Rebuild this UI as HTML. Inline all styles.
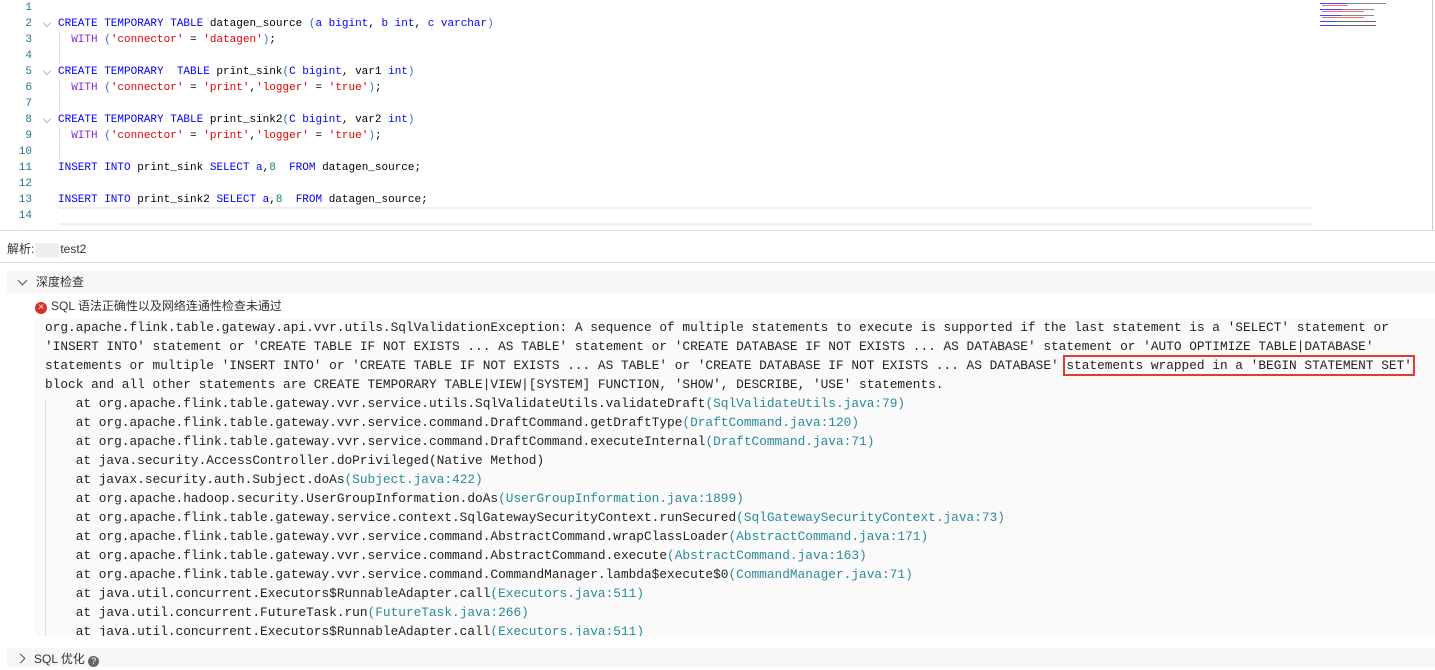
<!DOCTYPE html>
<html><head><meta charset="utf-8"><style>
body{margin:0;width:1435px;height:667px;overflow:hidden;background:#fff;font-family:"Liberation Sans","Noto Sans CJK SC",sans-serif;position:relative}
.ed{position:absolute;left:0;top:0;width:1435px;height:230px;border-bottom:1px solid #ddd;font-family:"Liberation Mono",monospace;font-size:11px}
.ln{position:absolute;left:0;width:32px;text-align:right;color:#237893;height:16px;line-height:16px}
.cl{position:absolute;left:58px;height:16px;line-height:16px;white-space:pre;color:#000}
.k{color:#0000ff}.p{color:#8030e0}.s{color:#e00000}.n{color:#098658}.b{color:#3070d0}
.fold{position:absolute;left:44px;width:5px;height:5px;border-right:1px solid #bbb;border-bottom:1px solid #bbb;transform:rotate(45deg)}
.gl{position:absolute;left:59px;width:1px;background:#ddd}
.mono{font-family:"Liberation Mono",monospace;font-size:12.8px;white-space:pre;color:#222}
.t{color:#2a8a9a}
.mm{position:absolute;height:1px}
</style></head><body>
<div class="ed">
<div class="ln" style="top:0">1</div><div class="ln" style="top:16px">2</div><div class="ln" style="top:32px">3</div><div class="ln" style="top:48px">4</div><div class="ln" style="top:64px">5</div><div class="ln" style="top:80px">6</div><div class="ln" style="top:96px">7</div><div class="ln" style="top:112px">8</div><div class="ln" style="top:128px">9</div><div class="ln" style="top:144px">10</div><div class="ln" style="top:160px">11</div><div class="ln" style="top:176px">12</div><div class="ln" style="top:192px">13</div><div class="ln" style="top:208px">14</div>
<div class="fold" style="top:20px"></div><div class="fold" style="top:68px"></div><div class="fold" style="top:116px"></div>
<div class="gl" style="top:32px;height:32px"></div><div class="gl" style="top:80px;height:32px"></div><div class="gl" style="top:128px;height:32px"></div>
<div class="cl" style="top:16px"><span class="k">CREATE TEMPORARY TABLE</span> datagen_source <span class="b">(</span><span class="k">a bigint</span>, <span class="k">b int</span>, <span class="k">c varchar</span><span class="b">)</span></div>
<div class="cl" style="top:32px">  <span class="p">WITH</span> <span class="b">(</span><span class="s">'connector'</span> = <span class="s">'datagen'</span><span class="b">)</span>;</div>
<div class="cl" style="top:64px"><span class="k">CREATE TEMPORARY  TABLE</span> print_sink<span class="b">(</span><span class="k">C bigint</span>, var1 <span class="k">int</span><span class="b">)</span></div>
<div class="cl" style="top:80px">  <span class="p">WITH</span> <span class="b">(</span><span class="s">'connector'</span> = <span class="s">'print'</span>,<span class="s">'logger'</span> = <span class="s">'true'</span><span class="b">)</span>;</div>
<div class="cl" style="top:112px"><span class="k">CREATE TEMPORARY TABLE</span> print_sink2<span class="b">(</span><span class="k">C bigint</span>, var2 <span class="k">int</span><span class="b">)</span></div>
<div class="cl" style="top:128px">  <span class="p">WITH</span> <span class="b">(</span><span class="s">'connector'</span> = <span class="s">'print'</span>,<span class="s">'logger'</span> = <span class="s">'true'</span><span class="b">)</span>;</div>
<div class="cl" style="top:160px"><span class="k">INSERT INTO</span> print_sink <span class="k">SELECT a</span>,<span class="n">8</span>  <span class="k">FROM</span> datagen_source;</div>
<div class="cl" style="top:192px"><span class="k">INSERT INTO</span> print_sink2 <span class="k">SELECT a</span>,<span class="n">8</span>  <span class="k">FROM</span> datagen_source;</div>
<div style="position:absolute;left:58px;top:207px;width:1254px;height:14px;border-top:2px solid #eee;border-bottom:2px solid #eee"></div>
<div class="mm" style="left:1320px;top:3px;width:66px;background:linear-gradient(90deg,#44f 0 40%,#888 40% 100%)"></div>
<div class="mm" style="left:1322px;top:5px;width:26px;background:linear-gradient(90deg,#a6f 0 20%,#f66 20% 100%)"></div>
<div class="mm" style="left:1320px;top:9px;width:54px;background:linear-gradient(90deg,#44f 0 40%,#888 40% 100%)"></div>
<div class="mm" style="left:1322px;top:11px;width:42px;background:linear-gradient(90deg,#a6f 0 20%,#f66 20% 100%)"></div>
<div class="mm" style="left:1320px;top:15px;width:54px;background:linear-gradient(90deg,#44f 0 40%,#888 40% 100%)"></div>
<div class="mm" style="left:1322px;top:17px;width:42px;background:linear-gradient(90deg,#a6f 0 20%,#f66 20% 100%)"></div>
<div class="mm" style="left:1320px;top:21px;width:56px;background:linear-gradient(90deg,#44f 0 30%,#666 30% 100%)"></div>
<div class="mm" style="left:1320px;top:25px;width:56px;background:linear-gradient(90deg,#44f 0 30%,#666 30% 100%)"></div>
<div style="position:absolute;left:1432px;top:0;width:1px;height:230px;background:#ccc"></div>
</div>
<div style="position:absolute;left:7px;top:240px;font-size:12px;color:#333">解析:<span style="display:inline-block;width:24px;height:14px;background:#eee;vertical-align:middle;margin:0 1px"></span>test2</div>
<div style="position:absolute;left:0;top:262px;width:1435px;height:1px;background:#ddd"></div>
<div style="position:absolute;left:7px;top:271px;width:1428px;height:22px;background:#f7f7f7;font-size:12px;color:#333;line-height:22px"><span style="display:inline-block;width:6px;height:6px;border-right:1px solid #555;border-bottom:1px solid #555;transform:rotate(45deg);margin:0 10px 2px 12px"></span>深度检查</div>
<div style="position:absolute;left:35px;top:298px;font-size:12px;color:#333;line-height:16px"><span style="display:inline-block;width:12px;height:12px;border-radius:50%;background:#d9302c;color:#fff;font-size:10px;line-height:12px;text-align:center;vertical-align:0px;margin-right:4px">×</span>SQL 语法正确性以及网络连通性检查未通过</div>
<div style="position:absolute;left:35px;top:318px;width:1400px;height:318px;background:#fafafa;overflow:hidden">
<div style="position:absolute;left:10px;top:82px;width:1px;height:240px;background:#ddd"></div>
<div class="mono" style="position:absolute;left:10px;top:0;line-height:19px">org.apache.flink.table.gateway.api.vvr.utils.SqlValidationException: A sequence of multiple statements to execute is supported if the last statement is a 'SELECT' statement or
'INSERT INTO' statement or 'CREATE TABLE IF NOT EXISTS ... AS TABLE' statement or 'CREATE DATABASE IF NOT EXISTS ... AS DATABASE' statement or 'AUTO OPTIMIZE TABLE|DATABASE'
statements or multiple 'INSERT INTO' or 'CREATE TABLE IF NOT EXISTS ... AS TABLE' or 'CREATE DATABASE IF NOT EXISTS ... AS DATABASE' <span style="outline:2px solid #e53935;outline-offset:1px">statements wrapped in a 'BEGIN STATEMENT SET'</span>
block and all other statements are CREATE TEMPORARY TABLE|VIEW|[SYSTEM] FUNCTION, 'SHOW', DESCRIBE, 'USE' statements.
    at org.apache.flink.table.gateway.vvr.service.utils.SqlValidateUtils.validateDraft<span class="t">(SqlValidateUtils.java:79)</span>
    at org.apache.flink.table.gateway.vvr.service.command.DraftCommand.getDraftType<span class="t">(DraftCommand.java:120)</span>
    at org.apache.flink.table.gateway.vvr.service.command.DraftCommand.executeInternal<span class="t">(DraftCommand.java:71)</span>
    at java.security.AccessController.doPrivileged(Native Method)
    at javax.security.auth.Subject.doAs<span class="t">(Subject.java:422)</span>
    at org.apache.hadoop.security.UserGroupInformation.doAs<span class="t">(UserGroupInformation.java:1899)</span>
    at org.apache.flink.table.gateway.service.context.SqlGatewaySecurityContext.runSecured<span class="t">(SqlGatewaySecurityContext.java:73)</span>
    at org.apache.flink.table.gateway.vvr.service.command.AbstractCommand.wrapClassLoader<span class="t">(AbstractCommand.java:171)</span>
    at org.apache.flink.table.gateway.vvr.service.command.AbstractCommand.execute<span class="t">(AbstractCommand.java:163)</span>
    at org.apache.flink.table.gateway.vvr.service.command.CommandManager.lambda$execute$0<span class="t">(CommandManager.java:71)</span>
    at java.util.concurrent.Executors$RunnableAdapter.call<span class="t">(Executors.java:511)</span>
    at java.util.concurrent.FutureTask.run<span class="t">(FutureTask.java:266)</span>
    at java.util.concurrent.Executors$RunnableAdapter.call<span class="t">(Executors.java:511)</span></div>
</div>
<div style="position:absolute;left:7px;top:648px;width:1428px;height:19px;background:#f7f7f7;font-size:12px;color:#333;line-height:22px"><span style="display:inline-block;width:6px;height:6px;border-right:1px solid #555;border-bottom:1px solid #555;transform:rotate(-45deg);margin:0 10px 1px 10px"></span>SQL 优化 <span style="display:inline-block;width:11px;height:11px;border-radius:50%;background:#666;color:#fff;font-size:9px;line-height:11px;text-align:center;vertical-align:-1px">?</span></div>
</body></html>
